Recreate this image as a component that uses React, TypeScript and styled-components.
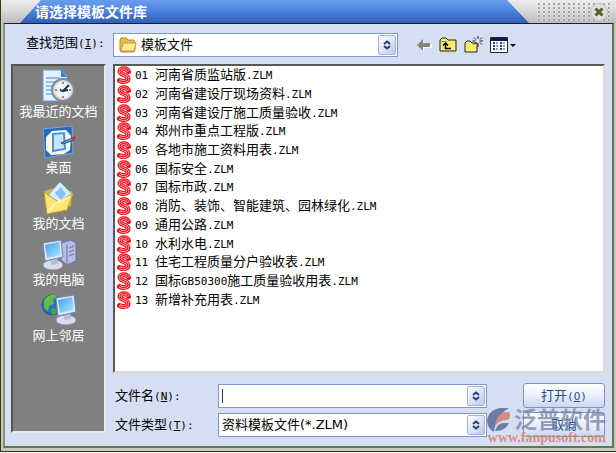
import React, { useState } from 'react';
import styled, { createGlobalStyle } from 'styled-components';

const fontStack = '"Liberation Sans", "Noto Sans CJK SC", sans-serif';

const GlobalStyle = createGlobalStyle`
  * { box-sizing: border-box; }
  body { margin: 0; background: #fff; }
  button, input, select { font: inherit; color: inherit; margin: 0; }
`;

const Dialog = styled.main`
  display: flex;
  flex-direction: column;
  min-height: calc(100vh - 1px);
  font: 13px/18px ${fontStack};
  color: #000;
  background: #c6cabb;
  border: solid #2c3d0c;
  border-width: 0 0 1px 1px;
`;

const TitleBar = styled.header`
  display: flex;
  height: 23px;
  background: linear-gradient(#ececec, #dcdcdc 40%, #bcbcbc);
`;

const TitleFill = styled.div`
  flex: 1;
  display: flex;
  margin-left: 19px;
  padding-left: 15px;
  background: linear-gradient(#6b9cec, #5c94ec 20%, #4b80d9 50%, #3160b5);
  clip-path: polygon(21px 0, calc(100% - 22px) 0, 100% 100%, 0 100%);
`;

const Title = styled.h1`
  margin: 0;
  font-size: 14px;
  line-height: 24px;
  font-weight: 700;
  color: #fff;
`;

const Grip = styled.div`
  display: flex;
  justify-content: flex-end;
  align-items: center;
  width: 74px;
  margin: 2px 5px 2px 8px;
  background: radial-gradient(circle at 2px 2px, #a2a2a2 1px, #f2f2f2 1px, transparent 2px) 0 0 / 5px 4px;
`;

const CloseButton = styled.button`
  display: grid;
  place-items: center;
  width: 18px;
  height: 18px;
  margin-right: 3px;
  padding: 0;
  border: 1px solid #c0c1bc;
  border-radius: 50%;
  background: #dfe0dc;
`;

const Body = styled.div`
  flex: 1;
  display: flex;
  flex-direction: column;
  gap: 7px;
  margin: 0 2px 3px;
  padding: 9px 7px 9px 6px;
  background: #d6def4;
  border: 2px solid #66754d;
  border-top: 1px solid #17202c;
  border-left-color: #88927a;
`;

const LookInRow = styled.div`
  display: flex;
  align-items: center;
`;

const LookInLabel = styled.label`
  width: 102px;
  padding: 0 0 4px 15px;
`;

const Combo = styled.div`
  flex: 1;
  display: grid;
  grid-template-columns: 1fr;
  align-items: center;
  min-width: 0;
  height: 24px;
  background: #fff;
  border: 1px solid #7f96d2;

  > * { grid-area: 1 / 1; }
  > svg { margin-left: 5px; z-index: 1; pointer-events: none; }
`;

const Select = styled.select<{ $inset: number }>`
  width: 100%;
  height: 22px;
  padding: 0 20px 0 ${p => p.$inset}px;
  font-family: "DejaVu Sans", "Noto Sans CJK SC", sans-serif;
  appearance: none;
  border: 0;
  outline: 0;
  background: transparent;
`;

const FileInput = styled.input`
  width: 100%;
  height: 22px;
  padding: 0 20px 0 3px;
  border: 0;
  outline: 0;
  background: transparent;

  &:placeholder-shown {
    background: linear-gradient(#333, #333) 3px 50% / 1px 14px no-repeat;
  }
`;

const StepperFace = styled.span`
  justify-self: end;
  display: grid;
  place-items: center;
  width: 18px;
  height: 20px;
  margin-right: 1px;
  pointer-events: none;
  border: 1px solid #a3b2d6;
  border-radius: 2px;
  background: linear-gradient(135deg, #fdfdff, #d8e0f2 60%, #bcc9e6);
`;

const Toolbar = styled.div`
  display: flex;
  align-items: center;
  gap: 7px;
  width: 207px;
  padding-left: 18px;
`;

const ToolButton = styled.button`
  display: flex;
  align-items: center;
  padding: 0;
  border: 0;
  background: none;
`;

const Main = styled.div`
  flex: 1;
  display: flex;
  gap: 7px;
`;

const Places = styled.nav`
  width: 95px;
  margin-bottom: 4px;
  padding-top: 3px;
  background: #808080;
  border: 2px solid #55564f;
  border-right-color: #edeae0;
  border-bottom-color: #edeae0;
`;

const Place = styled.button`
  display: flex;
  flex-direction: column;
  align-items: center;
  width: 100%;
  height: 56px;
  padding: 0;
  border: 0;
  background: none;
  color: #fff;
  white-space: nowrap;
`;

const Content = styled.div`
  flex: 1;
  display: flex;
  flex-direction: column;
  min-width: 0;
`;

const FilePane = styled.div`
  flex: 1;
  margin-bottom: 10px;
  background: #fff;
  border: 2px solid #5a5a55;
  border-right-color: #dedbd1;
  border-bottom-color: #dedbd1;
`;

const FileRows = styled.ul`
  display: grid;
  grid-auto-rows: minmax(0, 1fr);
  height: 243px;
  margin: 0;
  padding: 0;
  list-style: none;
`;

const FileRow = styled.li`
  display: flex;
  align-items: center;
  gap: 4px;
  padding-left: 2px;
  white-space: pre;
`;

const Latin = styled.span`
  font-family: "DejaVu Sans Mono", monospace;
  font-size: 11px;
  line-height: 1;
`;

const Form = styled.form`
  display: grid;
  grid-template-columns: 105px minmax(0, 1fr) 82px;
  align-items: center;
  row-gap: 4px;
`;

const FieldLabel = styled.label`
  padding-left: 2px;
`;

const ComboCell = styled.div`
  display: flex;
  margin-right: 36px;
`;

const ActionButton = styled.button`
  height: 25px;
  padding: 0;
  color: #1f4f86;
  border: 1px solid #8093b5;
  border-radius: 3px;
  background: linear-gradient(#fff, #eaf0fb 50%, #cbd7f0);
`;

const CancelCell = styled.div`
  position: relative;
  display: grid;
`;

const Watermark = styled.div`
  position: absolute;
  right: -1px;
  top: -4px;
  width: 120px;
  pointer-events: none;
`;

const Brand = styled.div`
  display: flex;
  align-items: center;
  justify-content: space-between;
  height: 24px;
  font-size: 23px;
  font-weight: 700;
  line-height: 24px;
  color: #7583a8c4;
`;

const BrandUrl = styled.div`
  font: bold 14px/12px "Liberation Serif", serif;
  text-align: right;
  color: #d7836fdd;
`;

function Mixed({ text }: { text: string }) {
  return (
    <span>
      {text.split(/([\x20-\x7e]+)/).map((part, i) =>
        i % 2 ? <Latin key={i}>{part}</Latin> : part
      )}
    </span>
  );
}

function KeyLabel({ text, hotkey, colon = true }: { text: string; hotkey: string; colon?: boolean }) {
  return (
    <>
      {text}
      <Latin>(<u>{hotkey}</u>){colon && ':'}</Latin>
    </>
  );
}

function Stepper() {
  return (
    <StepperFace aria-hidden="true">
      <svg width="8" height="10" viewBox="0 0 8 10" fill="none" stroke="#263f75" strokeWidth="2">
        <path d="M1 4 4 1.5 7 4M1 6 4 8.5 7 6" />
      </svg>
    </StepperFace>
  );
}

const FolderIcon = () => (
  <svg width="18" height="16" viewBox="0 0 18 16">
    <path d="M1 13V3l1-2h5l2 2h6l1 2v8l-1 2H2z" fill="#e9bc45" stroke="#b58325" />
    <path d="M2 14 4 6h13l-2 8z" fill="#ffe99a" stroke="#c99a35" />
  </svg>
);

const sealPath = 'M11.500 5.500C9.500 1.500 3 2 3 5.500c0 3.500 8 3 8 7 0 3.500-5.500 3.500-8.500 2';

const SealIcon = () => (
  <svg width="14" height="18" viewBox="0 0 14 18" fill="none">
    <path d={sealPath} stroke="#f0101c" strokeWidth="5" strokeLinecap="round" />
    <path d={sealPath} stroke="#ffc4c8" strokeWidth="2.600" />
    <path d={sealPath} stroke="#f0101c" strokeWidth="1.200" />
  </svg>
);

const BackIcon = () => (
  <svg width="16" height="14" viewBox="0 0 16 14">
    <path d="m2 8 6-6v4h8v4H8v4z" fill="#fff" />
    <path d="m1 7 6-6v4h7v4H7v4z" fill="#858585" />
  </svg>
);

const UpIcon = () => (
  <svg width="18" height="16" viewBox="0 0 18 16">
    <path d="M1 14V3l2-2h4l2 2h8v11z" fill="#f3ed70" stroke="#26250c" />
    <path d="M1.500 4.500h6" stroke="#8f8b38" />
    <path d="M6.500 6v5.500H12M4 8.500 6.500 6 9 8.500" fill="none" stroke="#000" strokeWidth="1.500" />
  </svg>
);

const NewFolderIcon = () => (
  <svg width="19" height="18" viewBox="0 0 19 18">
    <path d="M1 16V7l2-2h3l2 2h5v9z" fill="#f3ed70" stroke="#26250c" />
    <path d="M14 0v3m0 4v4M8.500 5h3m4 0H19M10 1.500l2 2m4 3 2 2m0-7-2 2m-4 3-2 2" stroke="#28251c" />
  </svg>
);

const ViewsIcon = () => (
  <svg width="26" height="16" viewBox="0 0 26 16">
    <path d="M.5.500h17v15H.500z" fill="#fff" stroke="#22262d" />
    <path d="M1 1h16v3H1z" fill="#101c43" />
    {[5, 8, 11].map(y => (
      <g key={y}>
        <path d={`M3 ${y}h2v2H3zM10 ${y}h2v2h-2z`} fill="#203ca0" />
        <path d={`M6 ${y + 1}h2m5 0h2`} stroke="#303d61" />
      </g>
    ))}
    <path d="M20 7h6l-3 3z" />
  </svg>
);

const Screen = ({ x, y, id }: { x: number; y: number; id: string }) => (
  <g transform={`translate(${x} ${y})`}>
    <linearGradient id={id} x2="1" y2="1">
      <stop stopColor="#3d9be9" />
      <stop offset="1" stopColor="#b4efff" />
    </linearGradient>
    <ellipse cx="11" cy="25" rx="10" ry="5" fill="#d9ddec" stroke="#8c94b7" />
    <path d="m9 19 6-1 1 6-7 1z" fill="#b6bdd6" />
    <path d="m1 3 18-3 2 17-18 4z" fill="#e3e6f6" stroke="#7485bd" />
    <path d="m3 5 14-3 2 13-14 3z" fill={`url(#${id})`} />
  </g>
);

const RecentIcon = () => (
  <svg width="34" height="34" viewBox="0 0 34 34">
    <path d="M1 1h18l6 6v25H1z" fill="#e5f1ff" stroke="#6a9cda" />
    <path d="M19 1v7h6z" fill="#347fd8" />
    <path d="M4 9h14M4 13h12M4 17h8M4 21h6M4 25h6" stroke="#94bae9" strokeWidth="2" />
    <circle cx="21" cy="21" r="11" fill="#d5dce5" stroke="#818a96" strokeWidth="2" />
    <circle cx="21" cy="21" r="8" fill="#eef8ff" />
    <path d="M21 13v2m0 12v2m-8-8h2m12 0h2" stroke="#e07045" strokeWidth="2" />
    <path d="m27 16-6 6-3-1m3 1 5-1" fill="none" stroke="#26384c" strokeWidth="2" />
  </svg>
);

const DesktopIcon = () => (
  <svg width="34" height="34" viewBox="0 0 34 34">
    <path d="m1 4 29-3 1 27-28 5z" fill="#2469c4" stroke="#72a8e7" />
    <path d="m4 12 6-6 14-1 5 6-1 14-6 4-13 1-5-5z" fill="#fff8dc" />
    <path d="m11 9 11-1 1 16-12 2z" fill="#c7e4ff" stroke="#4a91dc" strokeWidth="2" />
    <path d="m19 18 11-5 2 2-11 4z" fill="#72a9dc" stroke="#294c7d" />
    <path d="m30 12 3-1 1 3-3 1z" fill="#dc3030" />
  </svg>
);

const DocumentsIcon = () => (
  <svg width="34" height="34" viewBox="0 0 34 34">
    <path d="M2 10 13 7l5 6 12-3-1 15-23 7z" fill="#e5b633" />
    <path d="M7 13 18 1l13 13-17 15z" fill="#d9efff" stroke="#7fb8e8" />
    <path d="m13 12 6-6 5 7-5 6z" fill="#8bc1f2" />
    <path d="m2 11 10 7 5 3 14-9-6 17-20 4z" fill="#ffe477" stroke="#c89b28" />
    <path d="m6 31 8-9 14-6" fill="none" stroke="#fff5b5" strokeWidth="2" />
  </svg>
);

const ComputerIcon = () => (
  <svg width="36" height="34" viewBox="0 0 36 34">
    <path d="m20 6 10-3 5 3v18l-9 4-6-5z" fill="#b4bce3" stroke="#6670a8" />
    <path d="M26 8v20M28 11l5-2m-5 6 5-2m-5 6 5-2" stroke="#6874aa" />
    <Screen x={1} y={3} id="glass-computer" />
  </svg>
);

const NetworkIcon = () => (
  <svg width="36" height="34" viewBox="0 0 36 34">
    <circle cx="11" cy="12" r="10" fill="#296dc4" stroke="#2052a0" />
    <path d="M3 7c4-6 10-6 13-4l-4 4 1 4-5 2-1 5-4-3z" fill="#60bd43" />
    <path d="m10 15 6 1-1 5-4 1z" fill="#45a63d" />
    <Screen x={14} y={2} id="glass-network" />
  </svg>
);

const LogoMark = () => (
  <svg width="26" height="24" viewBox="0 0 26 24">
    <path d="M5 22C-3 14 2 1 15 0h8C15 5 9 13 8 24z" fill="#6b7ca8" />
    <path d="M9 18C10 9 15 3 23 4c2 3 1 6-1 8-5 0-9 1-13 6z" fill="#d58c7d" />
    <path d="M9 23c2-6 5-8 9-8h5c-2 5-7 8-14 8z" fill="#6b7ca8" />
  </svg>
);

const places = [
  { name: '我最近的文档', Icon: RecentIcon },
  { name: '桌面', Icon: DesktopIcon },
  { name: '我的文档', Icon: DocumentsIcon },
  { name: '我的电脑', Icon: ComputerIcon },
  { name: '网上邻居', Icon: NetworkIcon },
];

const files = [
  '01 河南省质监站版.ZLM',
  '02 河南省建设厅现场资料.ZLM',
  '03 河南省建设厅施工质量验收.ZLM',
  '04 郑州市重点工程版.ZLM',
  '05 各地市施工资料用表.ZLM',
  '06 国标安全.ZLM',
  '07 国标市政.ZLM',
  '08 消防、装饰、智能建筑、园林绿化.ZLM',
  '09 通用公路.ZLM',
  '10 水利水电.ZLM',
  '11 住宅工程质量分户验收表.ZLM',
  '12 国标GB50300施工质量验收用表.ZLM',
  '13 新增补充用表.ZLM',
];

export default function App() {
  const [fileName, setFileName] = useState('');

  return (
    <>
      <GlobalStyle />
      <Dialog>
        <TitleBar>
          <TitleFill><Title>请选择模板文件库</Title></TitleFill>
          <Grip>
            <CloseButton aria-label="关闭">
              <svg width="10" height="10" viewBox="0 0 10 10">
                <path d="m1.500 1.500 7 7m0-7-7 7" stroke="#4f6126" strokeWidth="3" />
              </svg>
            </CloseButton>
          </Grip>
        </TitleBar>
        <Body>
          <LookInRow>
            <LookInLabel htmlFor="look-in"><KeyLabel text="查找范围" hotkey="I" /></LookInLabel>
            <Combo>
              <FolderIcon />
              <Select id="look-in" $inset={27}><option>模板文件</option></Select>
              <Stepper />
            </Combo>
            <Toolbar>
              <ToolButton aria-label="后退"><BackIcon /></ToolButton>
              <ToolButton aria-label="向上一级"><UpIcon /></ToolButton>
              <ToolButton aria-label="新建文件夹"><NewFolderIcon /></ToolButton>
              <ToolButton aria-label="查看"><ViewsIcon /></ToolButton>
            </Toolbar>
          </LookInRow>
          <Main>
            <Places>
              {places.map(({ name, Icon }) => (
                <Place key={name}><Icon />{name}</Place>
              ))}
            </Places>
            <Content>
              <FilePane>
                <FileRows>
                  {files.map(file => (
                    <FileRow key={file}><SealIcon /><Mixed text={file} /></FileRow>
                  ))}
                </FileRows>
              </FilePane>
              <Form onSubmit={e => e.preventDefault()}>
                <FieldLabel htmlFor="file-name"><KeyLabel text="文件名" hotkey="N" /></FieldLabel>
                <ComboCell>
                  <Combo>
                    <FileInput
                      id="file-name"
                      placeholder=" "
                      value={fileName}
                      onChange={e => setFileName(e.target.value)}
                    />
                    <Stepper />
                  </Combo>
                </ComboCell>
                <ActionButton type="submit"><KeyLabel text="打开" hotkey="O" colon={false} /></ActionButton>
                <FieldLabel htmlFor="file-type"><KeyLabel text="文件类型" hotkey="T" /></FieldLabel>
                <ComboCell>
                  <Combo>
                    <Select id="file-type" $inset={3}><option>资料模板文件(*.ZLM)</option></Select>
                    <Stepper />
                  </Combo>
                </ComboCell>
                <CancelCell>
                  <ActionButton type="button">取消</ActionButton>
                  <Watermark aria-hidden="true">
                    <Brand><LogoMark />泛普软件</Brand>
                    <BrandUrl>www.fanpusoft.com</BrandUrl>
                  </Watermark>
                </CancelCell>
              </Form>
            </Content>
          </Main>
        </Body>
      </Dialog>
    </>
  );
}
